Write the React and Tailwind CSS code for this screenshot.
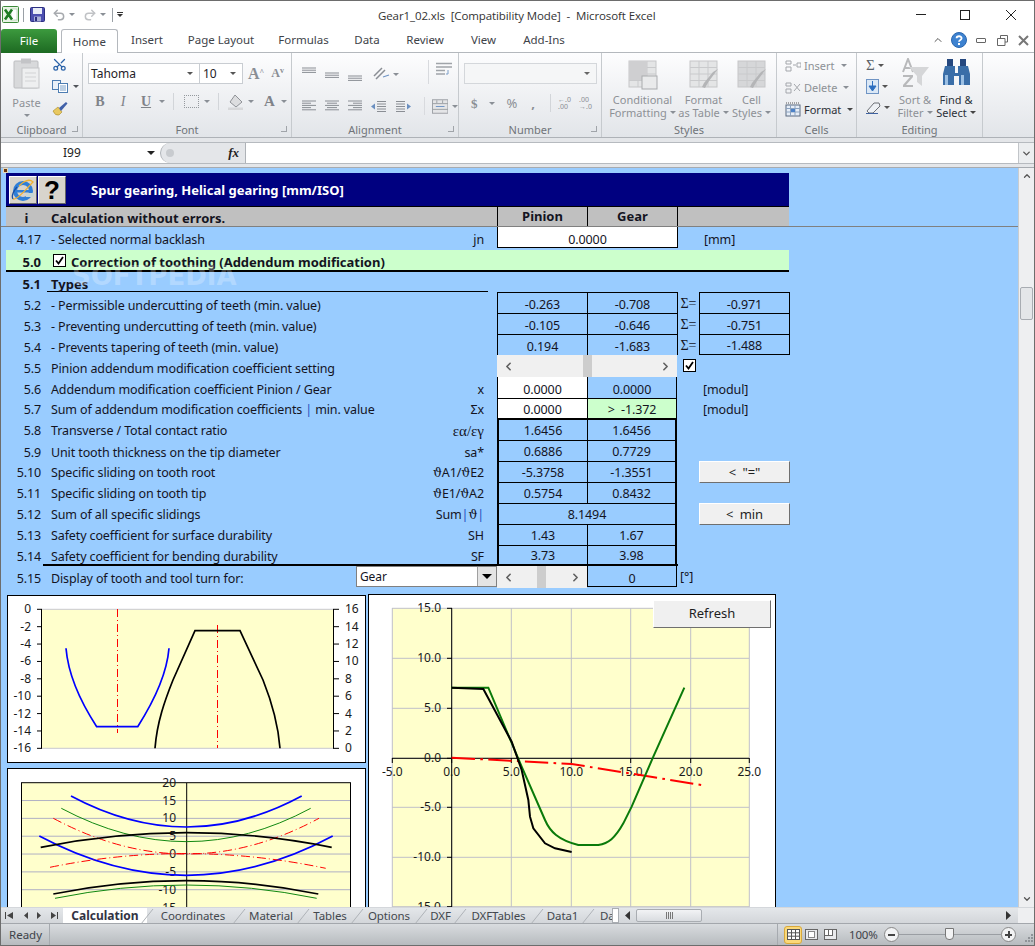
import React from "react";
import { Scissors, Undo2, Redo2, ChevronLeft, ChevronRight, ChevronUp, ChevronDown } from "lucide-react";

const Caret = ({ className = "" }) => (
  <span className={`inline-block w-0 h-0 border-l-[3px] border-r-[3px] border-t-[3px] border-l-transparent border-r-transparent border-t-[#8a8f96] ${className}`} />
);

// ---------- small drawings ----------
const ExcelLogo = () => (
  <svg width="17" height="17" viewBox="0 0 17 17" className="block">
    <rect x="0.5" y="0.5" width="16" height="16" rx="1" fill="#e8f3e4" stroke="#3d8a3a" />
    <rect x="9" y="3" width="6" height="11" fill="#fff" stroke="#9cc79a" strokeWidth="0.6" />
    <path d="M3 3.5 L10 13.5 M10 3.5 L3 13.5" stroke="#1e7b23" strokeWidth="2.6" />
  </svg>
);

const SaveIcon = () => (
  <svg width="15" height="15" viewBox="0 0 15 15" className="block">
    <rect x="0.5" y="0.5" width="14" height="14" rx="1" fill="#4c4fb0" stroke="#2c2f80" />
    <rect x="3" y="1" width="9" height="6" fill="#e8ecf6" />
    <rect x="4" y="9.5" width="7" height="5" fill="#aab0d8" />
    <rect x="5" y="10" width="2" height="4" fill="#2c2f80" />
  </svg>
);

const HelpIcon = () => (
  <svg width="16" height="16" viewBox="0 0 16 16" className="block">
    <circle cx="8" cy="8" r="7.5" fill="#3d82d0" stroke="#2a66ae" />
    <path d="M5.6 6.2 C5.6 3.6 10.6 3.6 10.6 6.2 C10.6 8 8 7.8 8 9.8" fill="none" stroke="#fff" strokeWidth="1.8" />
    <rect x="7" y="11" width="2" height="2" fill="#fff" />
  </svg>
);

const Lines = ({ rows, w = 15 }) => (
  <svg width={w} height={rows.length * 2 + 3} className="block">
    {rows.map(([x, len], i) => (
      <rect key={i} x={x} y={i * 2.2 + 0.5} width={len} height="1" fill="#8a8e94" />
    ))}
  </svg>
);

const AlignTop = [[0, 14], [0, 14], [0, 14]];
const AlignLeft = [[0, 14], [0, 9], [0, 14], [0, 9], [0, 14]];
const AlignCenter = [[0, 14], [2, 10], [0, 14], [2, 10], [0, 14]];
const AlignRight = [[0, 14], [5, 9], [0, 14], [5, 9], [0, 14]];

const Indent = ({ flip }) => (
  <svg width="16" height="12" viewBox="0 0 16 12" className={`block ${flip ? "-scale-x-100" : ""}`}>
    <path d="M6 1.5h9M6 4h9M6 6.500h9M6 9h9M6 11.500h9" stroke="#8a8e94" />
    <path d="M0 6.500 L4 3.500 V9.500 Z" fill="#6a8fc0" />
  </svg>
);

const Grid4 = ({ children, fill = "#e4e5e6" }) => (
  <svg width="30" height="30" viewBox="0 0 30 30" className="block">
    <rect x="1" y="1" width="27" height="26" fill={fill} stroke="#c5c6c8" />
    <path d="M10 1v26M19 1v26M1 7.500h27M1 14h27M1 20.500h27" stroke="#c9cacc" />
    {children}
  </svg>
);

const Brush = () => (
  <path d="M29 9 L20 21 L16 28 L13 27 L15 23 L24 12 Z" fill="#b4b5b7" />
);

const Binoculars = () => (
  <svg width="29" height="30" viewBox="0 0 29 30" className="block">
    <rect x="5" y="1" width="6" height="7" fill="#25487f" />
    <rect x="18" y="1" width="6" height="7" fill="#25487f" />
    <path d="M3 8 h10 v7 h3 v-7 h10 l2 8 v11 h-11 v-9 h-5 v9 h-11 v-11 z" fill="#3a6ea8" />
    <rect x="3" y="17" width="3" height="10" fill="#9cc0e4" />
    <rect x="19" y="17" width="3" height="10" fill="#9cc0e4" />
  </svg>
);

const SortFilter = () => (
  <svg width="30" height="30" viewBox="0 0 30 30" className="block">
    <path d="M3 14 L8 1 L13 14 M5 10 H11" fill="none" stroke="#b8b9bb" strokeWidth="2" />
    <path d="M3 17 H13 V19 L6 27 H13 V29 H3 V27 L10 19 H3 Z" fill="#b8b9bb" />
    <path d="M9 9 H29 L22 18 V28 L17 24 V18 Z" fill="#d5d6d8" />
  </svg>
);

const IeLogo = () => (
  <svg width="24" height="24" viewBox="0 0 24 24" className="block">
    <circle cx="12" cy="13" r="8" fill="none" stroke="#2f7fd8" strokeWidth="4" />
    <rect x="6" y="12" width="13" height="2.500" fill="#2f7fd8" />
    <rect x="15" y="15" width="8" height="4" fill="#c7d6d4" />
    <path d="M2 21 C6 23 18 8 22 4 C18 0 12 4 8 8" fill="none" stroke="#f0b030" strokeWidth="1.300" />
    <path d="M2 21 C0 18 3 12 6 9" fill="none" stroke="#1d4fa0" strokeWidth="1.300" />
  </svg>
);

// ---------- ribbon ----------
const RibbonGroup = ({ w, label, launcher, children }) => (
  <div className={`${w} h-full flex flex-col border-r border-[#c6cace] shrink-0`}>
    <div className="flex-1 min-h-0">{children}</div>
    <div className="h-[16px] relative flex items-center justify-center text-[#707479]">
      {label}
      {launcher && <span className="absolute right-[4px] top-[5px] w-[6px] h-[6px] border-r border-b border-[#a0a4a9]" />}
    </div>
  </div>
);

const CaretLine = ({ children }) => (
  <span className="flex items-center gap-[3px] whitespace-nowrap">{children}<Caret /></span>
);

const Ribbon = () => (
  <div className="h-[85px] flex bg-gradient-to-b from-[#fdfdfe] to-[#e2e5e9] border-b border-[#aeb2b7] font-['Noto_Sans',sans-serif] text-[11px] leading-[13px] text-[#8d9196]">
    <RibbonGroup w="w-[82px]" label="Clipboard" launcher>
      <div className="flex pt-[5px] pl-[11px]">
        <div className="flex flex-col items-center w-[29px]">
          <svg width="27" height="31" viewBox="0 0 27 31" className="block">
            <rect x="1" y="3" width="24" height="27" rx="1" fill="#d8d9db" stroke="#bcbdc0" />
            <rect x="8" y="0.500" width="10" height="5" fill="#c3c4c7" />
            <rect x="9" y="10" width="17" height="20" fill="#eeeff0" stroke="#c4c5c8" />
            <path d="M12 15h11M12 19h11M12 23h11" stroke="#d2d3d5" />
          </svg>
          <span className="mt-[7px]">Paste</span>
          <Caret className="mt-[5px]" />
        </div>
        <div className="ml-[11px] flex flex-col gap-[6px] -mt-[1px]">
          <Scissors size={15} className="text-[#2a62a8] -rotate-90" />
          <div className="flex items-center gap-[5px] mt-[2px]">
            <svg width="16" height="13" viewBox="0 0 16 13" className="block">
              <rect x="0.500" y="0.500" width="8" height="9" fill="#e9f0f8" stroke="#4d7db2" />
              <rect x="6.500" y="3.500" width="9" height="9" fill="#fff" stroke="#4d7db2" />
              <path d="M8 6h6M8 8h6M8 10h6" stroke="#7ba0c8" />
            </svg>
            <Caret className="border-t-[#50545a]" />
          </div>
          <svg width="16" height="15" viewBox="0 0 16 15" className="block mt-[2px]">
            <path d="M1 10 L6 6 L10 11 L7 14 Q3 15 1 10Z" fill="#e8c860" stroke="#a88a28" strokeWidth="0.600" />
            <path d="M7 7 L14 1 L15.500 2.500 L9 10Z" fill="#4060a8" />
          </svg>
        </div>
      </div>
    </RibbonGroup>

    <RibbonGroup w="w-[209px]" label="Font" launcher>
      <div className="flex items-center pt-[10px] pl-[5px]">
        <div className="w-[112px] h-[21px] bg-white border border-[#c9cdd2] flex items-center justify-between pl-[2px] pr-[6px] text-[12px] text-[#1f2328]">
          Tahoma <Caret className="border-t-[#555]" />
        </div>
        <div className="w-[43px] h-[21px] bg-white border border-l-0 border-[#c9cdd2] flex items-center justify-between pl-[3px] pr-[6px] text-[12px] text-[#1f2328]">
          10 <Caret className="border-t-[#555]" />
        </div>
        <span className="ml-[5px] font-['Liberation_Serif',serif] font-bold text-[16px] text-[#8a8e94]">A<sup className="text-[8px]">^</sup></span>
        <span className="ml-[7px] font-['Liberation_Serif',serif] font-bold text-[12px] text-[#8a8e94]">A<sup className="text-[8px]">v</sup></span>
      </div>
      <div className="flex items-center pt-[9px] pl-[5px] font-['Liberation_Serif',serif] font-bold text-[14px] text-[#7f8389]">
        <span className="w-[24px] text-center">B</span>
        <span className="w-[22px] text-center italic font-normal">I</span>
        <span className="w-[24px] text-center underline">U</span>
        <Caret className="ml-[1px]" />
        <span className="w-px h-[17px] bg-[#d2d5d9] ml-[8px]" />
        <span className="ml-[10px] w-[15px] h-[13px] border border-dotted border-[#95999e]" />
        <Caret className="ml-[5px]" />
        <span className="w-px h-[17px] bg-[#d2d5d9] ml-[8px]" />
        <svg width="16" height="16" viewBox="0 0 16 16" className="block ml-[9px]">
          <path d="M7 1 L14 8 L8 13 L2 8 Z" fill="#dcdddf" stroke="#8f9297" />
          <rect x="0" y="13.500" width="15" height="2.500" fill="#d6d7d9" />
        </svg>
        <Caret className="ml-[4px]" />
        <span className="ml-[10px] text-[15px]">A</span>
        <Caret className="ml-[6px]" />
      </div>
    </RibbonGroup>

    <RibbonGroup w="w-[167px]" label="Alignment" launcher>
      <div className="flex pl-[10px] pt-[14px] h-[37px]">
        <div className="flex w-[126px] items-start">
          <Lines rows={AlignTop} />
          <div className="ml-[8px] mt-[5px]"><Lines rows={AlignTop} /></div>
          <div className="ml-[8px] mt-[8px]"><Lines rows={AlignTop} /></div>
          <svg width="18" height="14" viewBox="0 0 18 14" className="block ml-[10px]">
            <path d="M1 9 L9 1 M3 12 L12 3" stroke="#8a8e94" strokeWidth="1.500" />
            <path d="M10 10 L16 8" stroke="#6f94c4" strokeWidth="1.300" />
          </svg>
          <Caret className="ml-[2px] mt-[6px]" />
        </div>
        <span className="w-px h-[24px] bg-[#d8dade] -mt-[7px]" />
        <svg width="17" height="16" viewBox="0 0 17 16" className="block ml-[7px] -mt-[5px]">
          <path d="M0 1.500h16M0 5h16M0 8.500h9M0 12h9" stroke="#a0a4a9" strokeWidth="1.400" />
          <path d="M12 8 v4 h-2" fill="none" stroke="#7d9ec8" />
        </svg>
      </div>
      <div className="flex items-center pl-[10px] pt-[7px]">
        <div className="flex items-center gap-[8px] w-[119px]">
          <Lines rows={AlignLeft} />
          <Lines rows={AlignCenter} />
          <Lines rows={AlignRight} />
          <Indent />
          <Indent flip />
        </div>
        <span className="w-px h-[18px] bg-[#d8dade] ml-[7px]" />
        <svg width="17" height="15" viewBox="0 0 17 15" className="block ml-[7px]">
          <rect x="0.500" y="0.500" width="16" height="14" fill="#e4e5e7" stroke="#9da1a6" />
          <path d="M0 4.500h17M0 10.500h17M5 1v3M11 1v3" stroke="#9da1a6" />
          <path d="M4 7.500h9" stroke="#6f94c4" />
        </svg>
        <Caret className="ml-[4px]" />
      </div>
    </RibbonGroup>

    <RibbonGroup w="w-[143px]" label="Number" launcher>
      <div className="pl-[5px] pt-[10px]">
        <div className="w-[133px] h-[21px] bg-[#f5f6f7] border border-[#d4d7db] flex items-center justify-end pr-[6px]">
          <Caret className="border-t-[#666]" />
        </div>
      </div>
      <div className="flex items-center pl-[12px] pt-[10px] text-[13px] text-[#8a8e94] font-bold">
        <span className="font-['Liberation_Serif',serif]">$</span>
        <Caret className="ml-[11px]" />
        <span className="ml-[12px] font-normal">%</span>
        <span className="ml-[14px]">,</span>
        <span className="w-px h-[18px] bg-[#d2d5d9] ml-[15px]" />
        <span className="ml-[7px] text-[7px] leading-[7px] w-[15px] font-normal">←.0<br />.00</span>
        <span className="ml-[6px] text-[7px] leading-[7px] w-[15px] font-normal">.00<br />→.0</span>
      </div>
    </RibbonGroup>

    <RibbonGroup w="w-[175px]" label="Styles">
      <div className="flex pt-[7px]">
        <div className="w-[79px] ml-[1px] flex flex-col items-center shrink-0">
          <Grid4>
            <rect x="1" y="1" width="18" height="19" fill="#cfcfd1" />
            <rect x="14" y="16" width="15" height="13" fill="#e9eaeb" stroke="#a9abae" />
          </Grid4>
          <span className="mt-[3px]">Conditional</span>
          <CaretLine>Formatting</CaretLine>
        </div>
        <div className="w-[43px] flex flex-col items-center shrink-0">
          <Grid4><Brush /></Grid4>
          <span className="mt-[3px]">Format</span>
          <CaretLine>as Table</CaretLine>
        </div>
        <div className="w-[53px] flex flex-col items-center shrink-0">
          <Grid4 fill="#d6d7d9"><Brush /></Grid4>
          <span className="mt-[3px]">Cell</span>
          <CaretLine>Styles</CaretLine>
        </div>
      </div>
    </RibbonGroup>

    <RibbonGroup w="w-[80px]" label="Cells">
      <div className="flex flex-col pl-[8px] pt-[6px] gap-[9px]">
        <div className="flex items-center gap-[3px] h-[13px]">
          <svg width="16" height="12" viewBox="0 0 16 12" className="block"><path d="M1 1h5v3H1zM1 7h5v4H1zM8 5h3M12 3h4v4h-4z" fill="none" stroke="#a3a6ab" /></svg>
          Insert <Caret className="ml-[3px]" />
        </div>
        <div className="flex items-center gap-[3px] h-[13px]">
          <svg width="16" height="12" viewBox="0 0 16 12" className="block"><path d="M1 1h5v3H1zM1 7h5v4H1zM9 2l6 7M15 2l-6 7" fill="none" stroke="#a3a6ab" /></svg>
          Delete <Caret className="ml-[3px]" />
        </div>
        <div className="flex items-center gap-[3px] h-[13px] text-[#2c3138]">
          <svg width="16" height="15" viewBox="0 0 16 15" className="block"><rect x="1" y="3" width="14" height="11" fill="#e6eef8" stroke="#5b6a80" /><path d="M1 6.500h14M1 10h14M5.500 3v11M10 3v11" stroke="#8ca3c0" /><rect x="6" y="7" width="4" height="3" fill="#4c82c8" /><path d="M1 1h14" stroke="#555" strokeDasharray="1 1" /></svg>
          Format <Caret className="ml-[3px] border-t-[#444]" />
        </div>
      </div>
    </RibbonGroup>

    <RibbonGroup w="w-[126px]" label="Editing">
      <div className="flex pt-[5px]">
        <div className="w-[36px] pl-[9px] flex flex-col gap-[6px] text-[#5a5f66] shrink-0">
          <div className="flex items-center gap-[3px] h-[15px] font-['Liberation_Serif',serif] text-[15px]">Σ <Caret className="border-t-[#555]" /></div>
          <div className="flex items-center gap-[3px] h-[15px]">
            <svg width="13" height="15" viewBox="0 0 13 15" className="block"><rect x="0.500" y="0.500" width="12" height="14" fill="#dbe8f6" stroke="#6f94c4" /><path d="M6.500 2v6M3 7h7L6.500 12Z" fill="#2d6fc0" stroke="#2d6fc0" /></svg>
            <Caret className="border-t-[#555]" />
          </div>
          <div className="flex items-center gap-[3px] h-[15px]">
            <svg width="15" height="13" viewBox="0 0 15 13" className="block"><path d="M1 10 L8 2 H13 L14 5 L7 12 H3 Z" fill="#eef1f5" stroke="#6d7076" /><path d="M0 12.500h12" stroke="#3e62a0" /></svg>
            <Caret className="border-t-[#555]" />
          </div>
        </div>
        <div className="w-[44px] flex flex-col items-center shrink-0">
          <SortFilter />
          <span className="mt-[5px]">Sort &amp;</span>
          <CaretLine>Filter</CaretLine>
        </div>
        <div className="w-[38px] flex flex-col items-center text-[#2c3138] shrink-0">
          <Binoculars />
          <span className="mt-[5px] whitespace-nowrap">Find &amp;</span>
          <span className="flex items-center gap-[3px] whitespace-nowrap">Select <Caret className="border-t-[#444]" /></span>
        </div>
      </div>
    </RibbonGroup>
  </div>
);

// ---------- title bar and tabs ----------
const TitleBar = () => (
  <div className="h-[27px] flex items-center relative bg-white">
    <div className="flex items-center pl-[1px]">
      <ExcelLogo />
      <span className="w-px h-[14px] bg-[#9aa0a6] ml-[4px]" />
      <span className="ml-[6px]"><SaveIcon /></span>
      <Undo2 size={14} className="ml-[7px] text-[#a7aaae]" strokeWidth={2.500} />
      <Caret className="ml-[3px]" />
      <Redo2 size={14} className="ml-[8px] text-[#c0c2c5]" strokeWidth={2.500} />
      <Caret className="ml-[3px]" />
      <span className="w-px h-[14px] bg-[#9aa0a6] ml-[6px]" />
      <span className="ml-[4px] flex flex-col items-center gap-[1px]">
        <span className="w-[6px] h-px bg-[#333]" />
        <Caret className="border-t-[#333]" />
      </span>
    </div>
    <span className="absolute left-[377px] top-[5px] font-['Open_Sans',sans-serif] text-[11.500px] tracking-[-0.100px] leading-[20px] text-[#333] whitespace-pre">
      Gear1_02.xls  [Compatibility Mode]  -  Microsoft Excel
    </span>
    <div className="ml-auto flex items-center">
      <span className="w-[10px] h-px bg-[#222]" />
      <span className="ml-[34px] w-[10px] h-[10px] border border-[#222]" />
      <svg width="10" height="10" viewBox="0 0 10 10" className="block ml-[36px] mr-[18px]"><path d="M0 0L10 10M10 0L0 10" stroke="#222" /></svg>
    </div>
  </div>
);

const tabs = [
  ["Insert", "w-[58px]"],
  ["Page Layout", "w-[90px]"],
  ["Formulas", "w-[75px]"],
  ["Data", "w-[52px]"],
  ["Review", "w-[64px]"],
  ["View", "w-[53px]"],
  ["Add-Ins", "w-[68px]"],
];

const TabStrip = () => (
  <div className="h-[25px] flex items-end border-b border-[#b4b8bd] font-['Noto_Sans',sans-serif] text-[11.500px] text-[#3e4349] bg-white relative">
    <div className="w-[56px] h-[24px] rounded-t-[3px] bg-gradient-to-b from-[#3c9a3e] to-[#1d6a22] text-white flex items-center justify-center -mb-px">File</div>
    <div className="ml-[4px] w-[57px] h-[24px] -mb-px rounded-t-[3px] bg-white border border-b-0 border-[#b4b8bd] flex items-center justify-center z-10 tracking-[0.200px]">Home</div>
    {tabs.map(([t, w]) => (
      <div key={t} className={`${w} h-[24px] flex items-center justify-center`}>{t}</div>
    ))}
    <div className="ml-auto flex items-center h-[24px] pr-[5px]">
      <ChevronUp size={12} className="text-[#555]" strokeWidth={2} />
      <span className="ml-[7px]"><HelpIcon /></span>
      <span className="ml-[9px] w-[10px] h-[5px] border border-[#666] rounded-[1px]" />
      <svg width="11" height="11" viewBox="0 0 11 11" className="block ml-[11px]"><path d="M3.500 3V0.500H10.500V7H8M0.500 3.500H8V10.500H0.500Z" fill="none" stroke="#666" /></svg>
      <svg width="11" height="11" viewBox="0 0 11 11" className="block ml-[10px]"><path d="M1 1L10 10M10 1L1 10" stroke="#777" strokeWidth="2" /></svg>
    </div>
  </div>
);

const FormulaBar = () => (
  <div className="bg-[#e4e6e9] pt-[4px] pb-[3px] border-b border-[#a7abb0]">
    <div className="h-[22px] flex bg-white border-y border-[#b6babf] font-['Noto_Sans',sans-serif] text-[12px] text-[#222]">
      <div className="w-[159px] flex items-center justify-between shrink-0 pl-[62px] pr-[5px]">
        I99 <Caret className="border-t-[#222] border-l-[4px] border-r-[4px] border-t-[4px]" />
      </div>
      <div className="w-[86px] shrink-0 flex items-center justify-between bg-[#e4e6e9] rounded-l-[11px] border-l border-[#aeb2b7] border-r pl-[5px] pr-[6px]">
        <span className="w-[8px] h-[8px] rounded-full bg-[#c8cbcf]" />
        <span className="font-['Liberation_Serif',serif] italic font-bold text-[13px]">fx</span>
      </div>
      <div className="flex-1" />
      <div className="w-[16px] bg-[#eceef0] border-l border-[#c2c5c9] flex items-center justify-center">
        <ChevronDown size={11} className="text-[#555]" strokeWidth={3} />
      </div>
    </div>
  </div>
);

// ---------- sheet ----------
const boldText = "font-bold text-[13px] tracking-normal";

const Row = ({ h, n, label, sym, symClass = "", bold, lineBelow, pt = "pt-[2px]", className = "", children }) => (
  <div className={`flex ${h} ${className}`}>
    <div className={`w-[41px] shrink-0 text-right pr-[6px] ${pt} ${bold ? boldText : ""}`}>{n}</div>
    <div className={`shrink-0 flex justify-between pl-[4px] pr-[13px] ${pt} ${lineBelow ? "w-[441px] mr-[9px] border-b border-black" : "w-[450px]"} ${bold ? boldText : ""}`}>
      <span className="whitespace-nowrap">{label}</span>
      <span className={`whitespace-nowrap ${symClass}`}>{sym}</span>
    </div>
    {children}
  </div>
);

const Cell = ({ className = "", w = "w-[90px]", pt = "pt-[3px]", children }) => (
  <div className={`${w} ${pt} h-full flex items-center justify-center border-black shrink-0 ${className}`}>{children}</div>
);

const Unit = ({ pt = "pt-[3px]", children }) => <div className={`ml-[26px] ${pt}`}>{children}</div>;

const LegacyButton = ({ className = "", children }) => (
  <div className={`flex items-center justify-center bg-[#f0f0f0] border border-t-white border-l-white border-r-[#6f6f6f] border-b-[#6f6f6f] text-[#1f1f1f] text-[13px] whitespace-pre ${className}`}>{children}</div>
);

const ScrollCtl = ({ w, thumb }) => (
  <div className={`${w} h-full bg-[#f0f0f0] flex items-center justify-between px-[5px] shrink-0 relative`}>
    <ChevronLeft size={13} strokeWidth={3} className="text-[#606060]" />
    <ChevronRight size={13} strokeWidth={3} className="text-[#606060]" />
    <span className={`absolute top-0 bottom-0 w-[9px] bg-[#cdcdcd] ${thumb}`} />
  </div>
);

const Sigma = ({ value, last }) => (
  <>
    <Cell w="w-[22px]" className="border-l font-['Liberation_Serif',serif] text-[14px] tracking-normal"><span>Σ=</span></Cell>
    <Cell w="w-[91px]" className={`border-l border-r border-t ${last ? "border-b" : ""}`}>{value}</Cell>
  </>
);

const GroupCells = ({ a, b, first, merged }) =>
  merged ? (
    <Cell w="w-[180px]" pt="pt-[2px]" className="border-l-2 border-r-2 border-t">{merged}</Cell>
  ) : (
    <>
      <Cell pt="pt-[2px]" className={`border-l-2 ${first ? "border-t-2" : "border-t"}`}>{a}</Cell>
      <Cell pt="pt-[2px]" className={`border-l border-r-2 ${first ? "border-t-2" : "border-t"}`}>{b}</Cell>
    </>
  );

const Theta = () => <span className="font-['DejaVu_Serif',serif]">ϑ</span>;

const CheckBox = ({ className = "" }) => (
  <span className={`w-[13px] h-[13px] border border-black bg-white flex items-center justify-center shrink-0 ${className}`}>
    <svg width="9" height="9" viewBox="0 0 9 9" className="block"><path d="M1 4.500 L3.500 7.500 L8 1" fill="none" stroke="#000" strokeWidth="1.800" /></svg>
  </span>
);

const Sheet = () => (
  <div className="flex-1 relative overflow-hidden pt-[5px] pl-[5px] bg-[#99ccff] leading-[20px]">
    <span className="absolute left-[2px] top-0 w-[5px] h-[5px] bg-[#6b3b10] border border-[#e8d8b8]" />
    <div className="font-['Noto_Sans',sans-serif] text-[12.500px] tracking-[-0.120px] text-[#14141f]">
      {/* header */}
      <div className="h-[33px] w-[783px] bg-[#000080] flex items-center">
        <div className="ml-[3px] w-[28px] h-[28px] bg-[#d8d4cc] border border-t-white border-l-white border-r-[#666] border-b-[#666] flex items-center justify-center"><IeLogo /></div>
        <div className="ml-[1px] w-[28px] h-[28px] bg-[#d8d4cc] border border-t-white border-l-white border-r-[#666] border-b-[#666] flex items-center justify-center font-['Liberation_Sans',sans-serif] font-bold text-[26px] text-black">?</div>
        <span className={`ml-[25px] text-white ${boldText}`}>Spur gearing, Helical gearing [mm/ISO]</span>
      </div>
      <div className="-ml-[5px] pl-[5px] border-b border-[#808080] h-[21px]">
        <div className={`w-[783px] h-full bg-[#c0c0c0] flex border-t border-black ${boldText}`}>
          <div className="w-[41px] text-center pt-[1px]">i</div>
          <div className="w-[450px] pl-[4px] pt-[1px]">Calculation without errors.</div>
          <Cell pt="pb-[2px]" className="border-l">Pinion</Cell>
          <Cell pt="pb-[2px]" className="border-l">Gear</Cell>
          <Cell w="w-[112px]" pt="" className="border-l" />
        </div>
      </div>
      <Row h="h-[23px]" pt="pt-[3px]" n="4.17" label="- Selected normal backlash" sym="jn">
        <Cell w="w-[181px]" pt="pt-[5px]" className="!h-[21px] bg-white border-x border-b">0.0000</Cell>
        <Unit>[mm]</Unit>
      </Row>
      <Row h="h-[22px]" className="w-[783px] bg-[#ccffcc] border-b-2 border-black" n="5.0" bold label={
        <span className="flex items-center">
          <CheckBox className="ml-[2px] mr-[5px] -mt-[3px]" />
          Correction of toothing (Addendum modification)
        </span>
      } />
      <Row h="h-[20px]" n="5.1" bold lineBelow label="Types" />
      <Row h="h-[21px]" pt="pt-[4px]" n="5.2" label="- Permissible undercutting of teeth (min. value)">
        <Cell className="border-l border-t">-0.263</Cell>
        <Cell className="border-l border-t">-0.708</Cell>
        <Sigma value="-0.971" />
      </Row>
      <Row h="h-[21px]" pt="pt-[4px]" n="5.3" label="- Preventing undercutting of teeth (min. value)">
        <Cell className="border-l border-t">-0.105</Cell>
        <Cell className="border-l border-t">-0.646</Cell>
        <Sigma value="-0.751" />
      </Row>
      <Row h="h-[21px]" pt="pt-[4px]" n="5.4" label="- Prevents tapering of teeth (min. value)">
        <Cell className="border-l border-t">0.194</Cell>
        <Cell className="border-l border-t">-1.683</Cell>
        <Sigma value="-1.488" last />
      </Row>
      <Row h="h-[22px]" pt="pt-[4px]" n="5.5" label="Pinion addendum modification coefficient setting">
        <ScrollCtl w="w-[180px]" thumb="left-[86px]" />
        <CheckBox className="ml-[6px] mt-[4px]" />
      </Row>
      <Row h="h-[21px]" pt="pt-[3px]" n="5.6" label="Addendum modification coefficient Pinion / Gear" sym="x">
        <Cell pt="pt-[5px]" className="bg-white border-l">0.0000</Cell>
        <Cell pt="pt-[5px]" className="border-l border-r">0.0000</Cell>
        <Unit>[modul]</Unit>
      </Row>
      <Row h="h-[20px]" n="5.7" label={<>Sum of addendum modification coefficients <span className="text-[#1f4fc0]">|</span> min. value</>} sym="Σx">
        <Cell className="bg-white border-l border-t">0.0000</Cell>
        <Cell className="bg-[#ccffcc] border-l border-t border-r whitespace-pre">&gt;  -1.372</Cell>
        <Unit pt="pt-[2px]">[modul]</Unit>
      </Row>
      <Row h="h-[22px]" pt="pt-[3px]" n="5.8" label="Transverse / Total contact ratio" sym="εα/εγ" symClass="font-['Liberation_Serif',serif] text-[15px] tracking-normal">
        <GroupCells a="1.6456" b="1.6456" first />
      </Row>
      <Row h="h-[21px]" pt="pt-[3px]" n="5.9" label="Unit tooth thickness on the tip diameter" sym="sa*">
        <GroupCells a="0.6886" b="0.7729" />
      </Row>
      <Row h="h-[21px]" n="5.10" label="Specific sliding on tooth root" sym={<><Theta />A1/<Theta />E2</>}>
        <GroupCells a="-5.3758" b="-1.3551" />
        <LegacyButton className="ml-[22px] w-[91px] h-[22px]">&lt;  "="</LegacyButton>
      </Row>
      <Row h="h-[21px]" n="5.11" label="Specific sliding on tooth tip" sym={<><Theta />E1/<Theta />A2</>}>
        <GroupCells a="0.5754" b="0.8432" />
      </Row>
      <Row h="h-[21px]" n="5.12" label="Sum of all specific slidings" sym={<>Sum<span className="text-[#1f4fc0]">|</span><Theta /><span className="text-[#1f4fc0]">|</span></>}>
        <GroupCells merged="8.1494" />
        <LegacyButton className="ml-[22px] w-[91px] h-[22px]">&lt;  min</LegacyButton>
      </Row>
      <Row h="h-[21px]" n="5.13" label="Safety coefficient for surface durability" sym="SH">
        <GroupCells a="1.43" b="1.67" />
      </Row>
      <Row h="h-[19px]" n="5.14" label="Safety coefficient for bending durability" sym="SF">
        <GroupCells a="3.73" b="3.98" />
      </Row>
      <div className="ml-[37px] w-[635px] h-[2px] bg-black" />
      <div className="h-[22px] flex">
        <div className="w-[41px] shrink-0 text-right pr-[6px] pt-[3px]">5.15</div>
        <div className="w-[309px] pl-[4px] pt-[3px] shrink-0">Display of tooth and tool turn for:</div>
        <div className="w-[141px] h-[21px] bg-white border border-[#808080] flex items-center justify-between pl-[3px] text-[12px] shrink-0">
          Gear
          <span className="w-[19px] h-full bg-[#e4e4e4] border-l border-[#a0a0a0] flex items-center justify-center"><Caret className="border-t-black border-l-[5px] border-r-[5px] border-t-[5px]" /></span>
        </div>
        <ScrollCtl w="w-[90px]" thumb="left-[40px]" />
        <Cell pt="pt-[5px]" className="border-l border-r border-b !h-[21px]">0</Cell>
        <div className="ml-[3px] pt-[1px]">[°]</div>
      </div>
    </div>

    <Charts />

    <span className="absolute left-[71px] top-[93px] font-['DejaVu_Sans',sans-serif] font-bold text-[26px] leading-[30px] text-white/25">SOFTPEDIA</span>
  </div>
);

// ---------- charts ----------
const Charts = () => (
  <div className="flex items-start mt-[6px] ml-[1px] font-['Noto_Sans',sans-serif]">
    <div className="w-[359px] shrink-0 pt-[1px]">
      <div className="h-[168px] bg-white border border-black overflow-hidden">
        <ToothChart />
      </div>
      <div className="h-[200px] mt-[5px] bg-white border border-black overflow-hidden">
        <MeshChart />
      </div>
    </div>
    <div className="w-[408px] h-[340px] ml-[2px] bg-white border border-black overflow-hidden relative shrink-0">
      <SlidingChart />
      <LegacyButton className="absolute right-[4px] top-[5px] w-[118px] h-[28px] pb-[2px]">Refresh</LegacyButton>
    </div>
  </div>
);

const ToothChart = () => {
  const y = (k) => 609.3 + k * 17.38;
  return (
    <svg width="357" height="166" viewBox="8 596 357 166" className="block" fontSize="12" fill="#1a1a1a">
      <rect x="42" y="609.300" width="291" height="139" fill="#ffffcc" />
      <path d="M42 609.300H333M42 748.300H333" stroke="#c8c8d0" />
      <path d="M41.500 609V748.500M333.500 609V748.500" stroke="#000" />
      {[0, 1, 2, 3, 4, 5, 6, 7, 8].map((k) => (
        <g key={k}>
          <path d={`M37 ${y(k)}H42M333 ${y(k)}H339`} stroke="#000" />
          <text x="31" y={y(k) + 4} textAnchor="end">{k === 0 ? "0" : -2 * k}</text>
          <text x="345" y={y(k) + 4}>{16 - 2 * k}</text>
        </g>
      ))}
      <path d="M117.500 609V733M217.500 625V748" stroke="#ff0000" strokeDasharray="8 3 1 3" fill="none" />
      <path d="M66 648.300C68 672 78 698 96.700 726.700H137.700C156 698 167 672 169 648.300" fill="none" stroke="#0000ff" strokeWidth="1.700" />
      <path d="M155 748.300C157 722 165 700 173 680L195 630.700H240L263 680C271 700 278 722 280 748.300" fill="none" stroke="#000" strokeWidth="1.700" />
    </svg>
  );
};

const MeshChart = () => {
  const ticks = [20, 15, 10, 5, 0, -5, -10, -15];
  const y = (v) => 782.7 + (20 - v) * 3.567;
  return (
    <svg width="357" height="198" viewBox="8 769 357 198" className="block" fontSize="12" fill="#1a1a1a">
      <rect x="21.500" y="782.700" width="329" height="190" fill="#ffffcc" stroke="#000" />
      {ticks.slice(1).map((v) => (
        <path key={v} d={`M22 ${y(v)}H350`} stroke="#b0b0c4" />
      ))}
      <path d="M186.700 783V970" stroke="#000" />
      {ticks.map((v) => (
        <text key={v} x="176" y={y(v) + 4} textAnchor="end">{v}</text>
      ))}
      <path d="M71 796Q186.700 858 301.700 796" fill="none" stroke="#0000ff" strokeWidth="1.700" />
      <path d="M39.300 836Q186.700 914.600 332.700 836" fill="none" stroke="#0000ff" strokeWidth="1.700" />
      <path d="M61.300 808.300Q186.700 875 310.700 808.300" fill="none" stroke="#118811" />
      <path d="M55 898.300Q186.700 871.700 316.700 898.300" fill="none" stroke="#118811" />
      <path d="M53.300 818.300Q186.700 889.700 319 818.300" fill="none" stroke="#ff0000" strokeDasharray="9 3 1 3" />
      <path d="M50 867.300Q186.700 839.300 325.700 868.300" fill="none" stroke="#ff0000" strokeDasharray="9 3 1 3" />
      <path d="M40.700 847.300Q186.700 818 331.700 847.300" fill="none" stroke="#000" strokeWidth="1.700" />
      <path d="M53.300 894Q186.700 867.300 318.300 894" fill="none" stroke="#000" strokeWidth="1.700" />
    </svg>
  );
};

const SlidingChart = () => {
  const xs = [[-5, 392.3], [0, 451.7], [5, 511.3], [10, 571.3], [15, 630.7], [20, 690.7], [25, 749.3]];
  const ys = [[15, 608.3], [10, 658.3], [5, 708.3], [0, 758.3], [-5, 807.3], [-10, 857.3], [-15, 906.7]];
  return (
    <svg width="406" height="338" viewBox="369 595 406 338" className="block" fontSize="12" fill="#1a1a1a">
      <rect x="392.300" y="608.300" width="357" height="320" fill="#ffffcc" />
      {xs.map(([v, x]) => <path key={v} d={`M${x} 608V930`} stroke="#c0c0c8" />)}
      {ys.map(([v, y]) => <path key={v} d={`M392 ${y}H749`} stroke="#c0c0c8" />)}
      <path d="M451.700 608V930M392 758.300H749" stroke="#000" />
      {ys.map(([v, y]) => (
        <g key={v}>
          <path d={`M447 ${y}H452`} stroke="#000" />
          <text x="441" y={y + 4} textAnchor="end">{v.toFixed(1)}</text>
        </g>
      ))}
      {xs.map(([v, x]) => (
        <g key={v}>
          <path d={`M${x} 758V763`} stroke="#000" />
          <text x={x} y="776" textAnchor="middle">{v.toFixed(1)}</text>
        </g>
      ))}
      <g transform="translate(365 590) scale(0.33333)" fill="none">
        <path d="M260 503L620 522L1010 585" stroke="#ff0000" strokeWidth="6" strokeDasharray="70 16 8 16" />
        <path d="M260 293L370 293L470 530L540 690C555 725 580 750 640 765H700C730 760 750 745 775 700L800 650L865 500L958 293" stroke="#0a7a0a" strokeWidth="6" />
        <path d="M260 293L355 297L440 455L470 540L490 630L495 680L505 715L540 760L570 775L620 786" stroke="#000" strokeWidth="6" />
      </g>
    </svg>
  );
};

const VScroll = () => (
  <div className="w-[16px] bg-[#eeeff1] border-l border-[#c8ccd0] flex flex-col shrink-0">
    <div className="h-[16px] flex items-center justify-center"><ChevronUp size={10} strokeWidth={3} className="text-[#555]" /></div>
    <div className="mt-[103px] h-[33px] mx-[1px] bg-[#e4e6e9] border border-[#a8acb2] rounded-[2px]" />
    <div className="mt-auto h-[16px] flex items-center justify-center"><ChevronDown size={10} strokeWidth={3} className="text-[#555]" /></div>
  </div>
);

// ---------- bottom ----------
const sheets = [
  ["Coordinates", "w-[92px]"],
  ["Material", "w-[64px]"],
  ["Tables", "w-[54px]"],
  ["Options", "w-[64px]"],
  ["DXF", "w-[39px]"],
  ["DXFTables", "w-[77px]"],
  ["Data1", "w-[51px]"],
];

const Slash = () => (
  <svg width="14" height="16" viewBox="0 0 14 16" className="block shrink-0 -ml-[7px] -mr-[7px]">
    <path d="M1 16L13 1" stroke="#aeb2b7" fill="none" />
  </svg>
);

const SheetTabs = () => (
  <div className="h-[16px] flex items-stretch bg-gradient-to-b from-[#e4e7ea] to-[#d3d6da] font-['Noto_Sans',sans-serif] text-[11.500px] tracking-[-0.100px] leading-[15px] text-[#43484e] border-t border-[#d4d7db]">
    <svg width="62" height="15" viewBox="0 0 62 15" className="block shrink-0">
      <path d="M4.500 4V11" stroke="#444" />
      <path d="M12 4V11L6 7.500ZM27 4V11L23 7.500ZM36 4V11L40 7.500ZM50 4V11L55 7.500Z" fill="#444" />
      <path d="M56.500 4V11" stroke="#444" />
    </svg>
    <div className="w-[84px] bg-white text-center font-bold text-[12px] tracking-normal text-[#334] shrink-0">Calculation</div>
    <Slash />
    {sheets.map(([s, w]) => (
      <React.Fragment key={s}>
        <div className={`${w} text-center shrink-0`}>{s}</div>
        <Slash />
      </React.Fragment>
    ))}
    <div className="w-[24px] pl-[12px] overflow-hidden shrink-0">Da</div>
    <div className="w-[7px] bg-white border border-[#a9adb2] shrink-0" />
    <div className="w-[17px] flex items-center justify-center shrink-0">
      <svg width="5" height="9" viewBox="0 0 5 9" className="block"><path d="M5 0V9L0 4.500Z" fill="#333" /></svg>
    </div>
    <div className="w-[66px] my-[1px] bg-gradient-to-b from-[#f2f3f5] to-[#d9dce0] border border-[#a9adb2] rounded-[2px] flex items-center justify-center shrink-0">
      <svg width="7" height="7" viewBox="0 0 7 7" className="block"><path d="M0.500 0V7M2.500 0V7M4.500 0V7M6.500 0V7" stroke="#777" /></svg>
    </div>
    <div className="flex-1 flex items-center justify-end pr-[7px]">
      <svg width="5" height="9" viewBox="0 0 5 9" className="block"><path d="M0 0V9L5 4.500Z" fill="#333" /></svg>
    </div>
    <div className="w-[16px] bg-[#eeeff1] shrink-0" />
  </div>
);

const StatusBar = () => (
  <div className="h-[22px] flex items-center bg-gradient-to-b from-[#d9dcdf] to-[#b7bbbf] border-t border-[#a3a7ac] font-['Noto_Sans',sans-serif] text-[11.500px] text-[#3e4349]">
    <span className="pl-[8px] w-[48px]">Ready</span>
    <span className="w-px h-full bg-[#a6aaaf]" />
    <span className="ml-[727px] w-px h-full bg-[#a6aaaf]" />
    <span className="ml-[6px] w-[18px] h-[18px] bg-[#fbd979] border border-[#d9a93c] rounded-[3px] flex items-center justify-center">
      <svg width="13" height="11" viewBox="0 0 13 11" className="block"><rect x="0.500" y="0.500" width="12" height="10" fill="#fff" stroke="#555" /><path d="M0 3.800h13M0 7.200h13M4.500 0v11M8.500 0v11" stroke="#555" /></svg>
    </span>
    <span className="ml-[3px] w-[13px] h-[11px] border border-[#666] bg-[#e9eaec] flex items-center justify-center"><span className="w-[7px] h-[7px] border border-[#888] bg-white" /></span>
    <span className="ml-[6px] w-[13px] h-[11px] border border-[#666] bg-[#e9eaec] flex"><span className="w-[4px] h-[6px] border-r border-b border-[#666] bg-white" /><span className="w-[4px] h-[6px] border-r border-b border-[#666] bg-white" /></span>
    <span className="ml-[12px] w-[27px] text-center tracking-[-0.200px]">100%</span>
    <span className="ml-[8px] w-[15px] h-[15px] rounded-full border border-[#888] bg-[#f2f3f4] flex items-center justify-center"><span className="w-[7px] h-[2px] bg-[#444]" /></span>
    <span className="w-[102px] h-px bg-[#9a9ea3] relative">
      <span className="absolute left-[46px] -top-[6px] w-[9px] h-[12px] bg-[#f2f3f4] border border-[#777] rounded-b-[4px]" />
    </span>
    <span className="w-[15px] h-[15px] rounded-full border border-[#888] bg-[#f2f3f4] flex items-center justify-center relative"><span className="w-[7px] h-[2px] bg-[#444]" /><span className="absolute w-[2px] h-[7px] bg-[#444]" /></span>
    <svg width="10" height="10" viewBox="0 0 10 10" className="block ml-[7px] mt-[8px]">
      <path d="M8 0h2v2H8zM5 3h2v2H5zM8 3h2v2H8zM2 6h2v2H2zM5 6h2v2H5zM8 6h2v2H8z" fill="#8f9398" />
    </svg>
  </div>
);

export default function App() {
  return (
    <div className="w-[1035px] h-[946px] overflow-hidden border border-[#6d6d6d] flex flex-col bg-white">
      <TitleBar />
      <TabStrip />
      <Ribbon />
      <FormulaBar />
      <div className="flex-1 min-h-0 flex">
        <Sheet />
        <VScroll />
      </div>
      <SheetTabs />
      <StatusBar />
    </div>
  );
}
